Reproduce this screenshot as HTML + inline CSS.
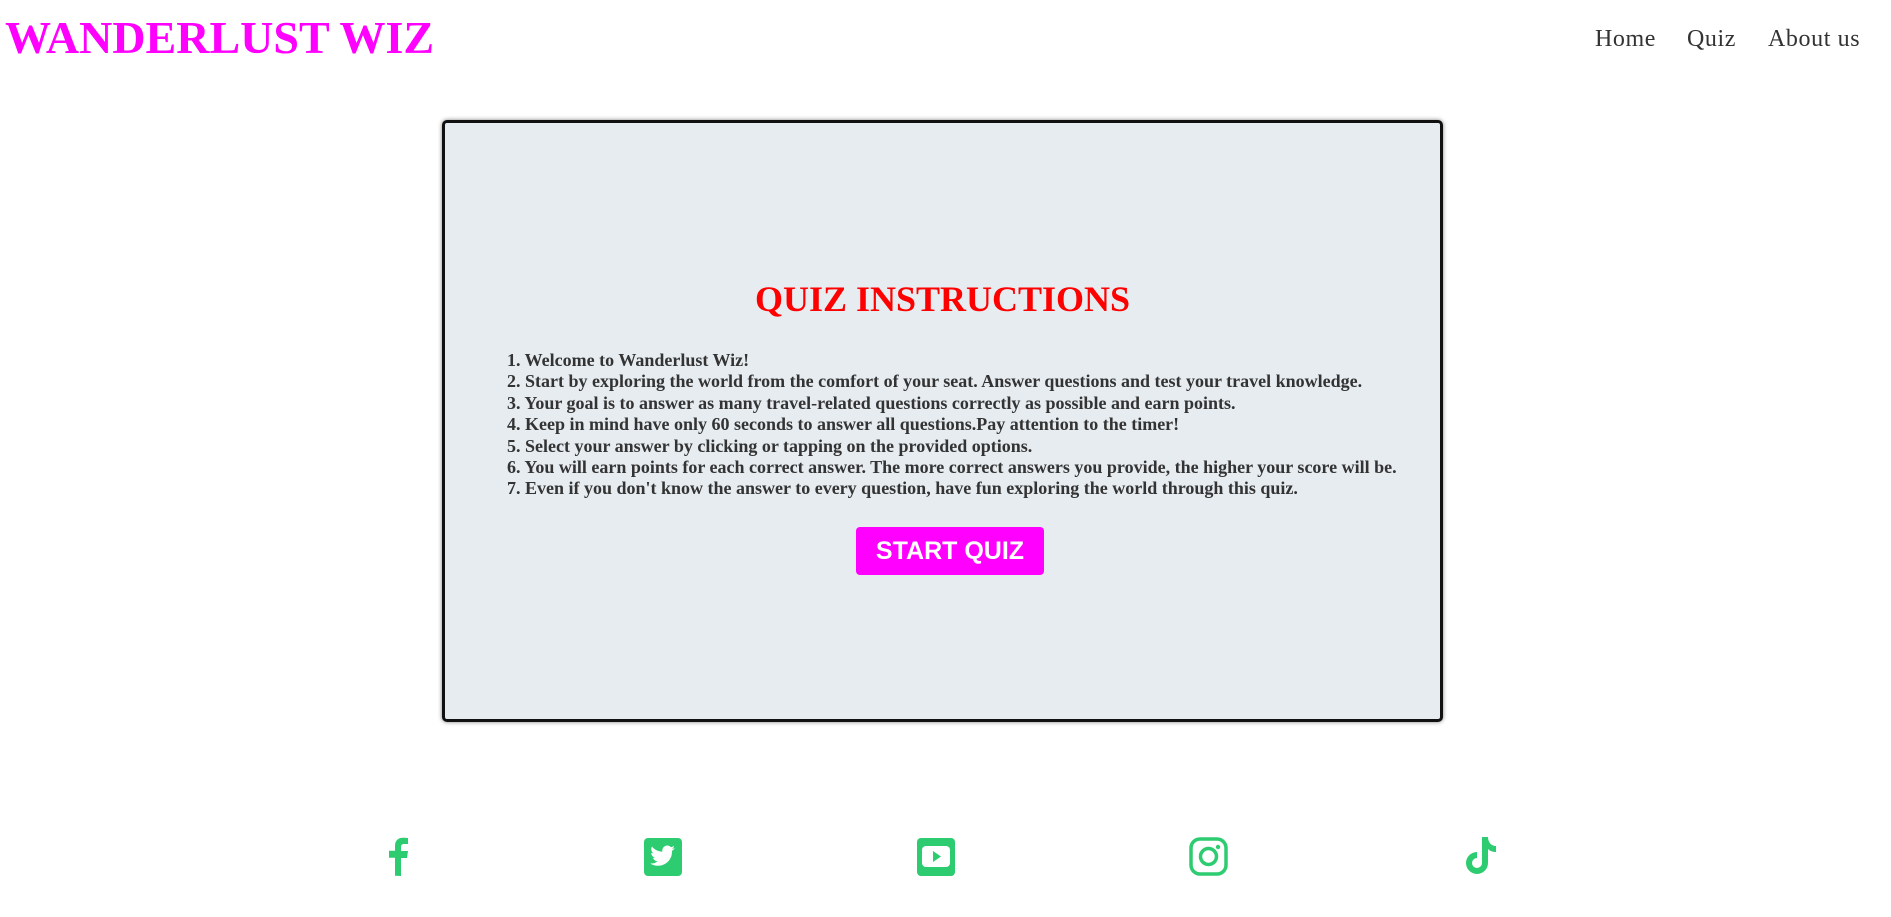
<!DOCTYPE html>
<html><head><meta charset="utf-8"><style>
*{margin:0;padding:0;box-sizing:border-box}
body{width:1891px;height:917px;background:#fff;position:relative;overflow:hidden;font-family:"Liberation Serif",serif}
.logo{position:absolute;left:5px;top:11px;font-size:46px;font-weight:bold;color:#ff00ff;white-space:nowrap}
.nav{position:absolute;top:26px;font-size:24px;color:#333;letter-spacing:0.6px}
.box{position:absolute;left:442px;top:120px;width:1001px;height:602px;background:#e6ecf0;border:3px solid #111;border-radius:5px;box-shadow:0 0 4px rgba(0,0,0,.5)}
h1{position:absolute;left:0;right:0;top:155px;text-align:center;color:#ff0000;font-size:36px;font-weight:bold}
.list{position:absolute;left:62px;top:227px;font-size:18px;font-weight:bold;color:#333;line-height:21.4px;white-space:nowrap}
.btn{position:absolute;left:411px;top:404px;width:188px;height:48px;background:#ff00ff;border-radius:4px;color:#fff;font-family:"Liberation Sans",sans-serif;font-weight:bold;font-size:25px;text-align:center;line-height:48px}
.ic{position:absolute;top:834px;width:44px;height:44px}
</style></head><body>
<div class="logo">WANDERLUST WIZ</div>
<div class="nav" style="left:1595px">Home</div>
<div class="nav" style="left:1687px">Quiz</div>
<div class="nav" style="left:1768px">About us</div>
<div class="box">
<h1>QUIZ INSTRUCTIONS</h1>
<div class="list">1. Welcome to Wanderlust Wiz!<br>2. Start by exploring the world from the comfort of your seat. Answer questions and test your travel knowledge.<br>3. Your goal is to answer as many travel-related questions correctly as possible and earn points.<br>4. Keep in mind have only 60 seconds to answer all questions.Pay attention to the timer!<br>5. Select your answer by clicking or tapping on the provided options.<br>6. You will earn points for each correct answer. The more correct answers you provide, the higher your score will be.<br>7. Even if you don't know the answer to every question, have fun exploring the world through this quiz.</div>
<div class="btn">START QUIZ</div>
</div>
<svg class="ic" style="left:377px" viewBox="0 0 44 44"><path d="M24 42V24h6l1-7h-7v-4c0-2 1-3 3-3h4V4c-1 0-3-.3-5-.3-5 0-8 3-8 8v5h-6v7h6v18z" fill="#2ecc71"/></svg>
<svg class="ic" style="left:641px" viewBox="0 0 44 44"><rect x="3" y="4" width="38" height="38" rx="4" fill="#2ecc71"/><path d="M34 14c-1 .5-2 .7-3 .8 1-.6 2-1.6 2-2.8-1 .6-2 1-3 1.2a5 5 0 0 0-8.6 4.5C17 17.5 13 15.5 11 12.5c-1.5 2.5-.5 5.5 1.5 6.8-.8 0-1.6-.3-2.3-.6 0 2.5 1.8 4.5 4 5-.7.2-1.5.2-2.2.1.6 2 2.5 3.4 4.6 3.5A10 10 0 0 1 9.3 29.5 14 14 0 0 0 31 17.5v-.6c1.2-.8 2.200-1.8 3-2.9z" fill="#fff"/></svg>
<svg class="ic" style="left:914px" viewBox="0 0 44 44"><rect x="3" y="4" width="38" height="38" rx="4" fill="#2ecc71"/><rect x="8" y="12" width="28" height="21" rx="4" fill="#fff"/><path d="M19 17v11l8-5.5z" fill="#2ecc71"/></svg>
<svg class="ic" style="left:1186px" viewBox="0 0 44 44"><rect x="5" y="5" width="35" height="35" rx="9" fill="none" stroke="#2ecc71" stroke-width="3.5"/><circle cx="22.5" cy="22.5" r="8" fill="none" stroke="#2ecc71" stroke-width="3.5"/><circle cx="32" cy="13" r="2.2" fill="#2ecc71"/></svg>
<svg class="ic" style="left:1459px" viewBox="0 0 44 44"><path d="M23 3h6c0 5 3 9 8 9v6c-3 0-6-1-8-3v14a11 11 0 1 1-11-11v6a5 5 0 1 0 5 5z" fill="#2ecc71"/></svg>
</body></html>
